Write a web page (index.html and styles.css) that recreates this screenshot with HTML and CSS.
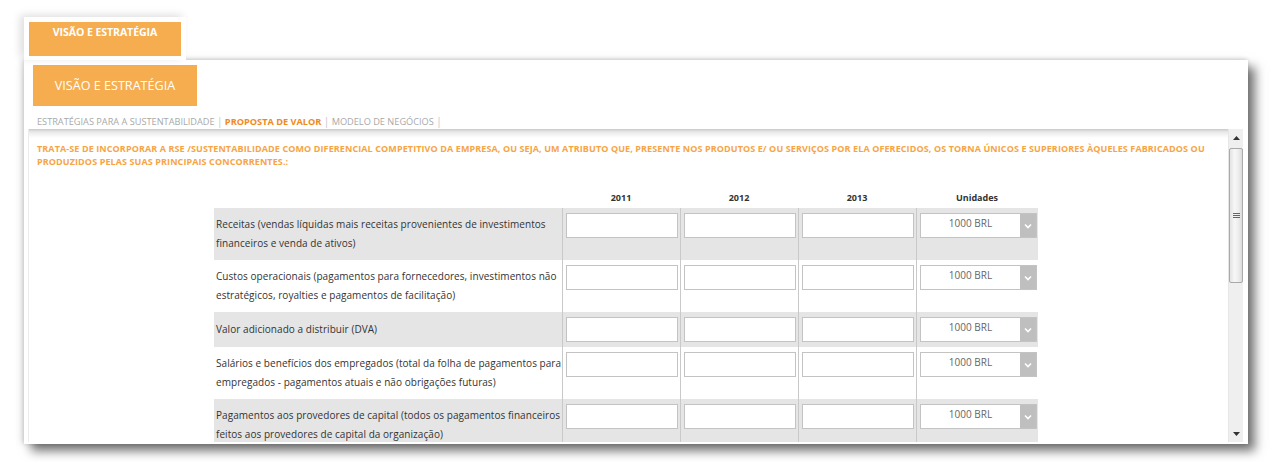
FILE: index.html
```html
<!DOCTYPE html>
<html lang="pt">
<head>
<meta charset="utf-8">
<title>Visão e Estratégia</title>
<link rel="stylesheet" href="styles.css">
</head>
<body>
<div class="page">
  <div class="tab"><div class="tab-label">VISÃO E ESTRATÉGIA</div></div>
  <div class="panel">
    <div class="panel-btn">VISÃO E ESTRATÉGIA</div>
    <nav class="crumbs"><span>ESTRATÉGIAS PARA A SUSTENTABILIDADE</span> <span class="sep">|</span> <span class="active">PROPOSTA DE VALOR</span> <span class="sep">|</span> <span>MODELO DE NEGÓCIOS</span> <span class="sep">|</span></nav>
    <div class="viewport">
      <div class="content">
        <p class="desc">TRATA-SE DE INCORPORAR A RSE /SUSTENTABILIDADE COMO DIFERENCIAL COMPETITIVO DA EMPRESA, OU SEJA, UM ATRIBUTO QUE, PRESENTE NOS PRODUTOS E/ OU SERVIÇOS POR ELA OFERECIDOS, OS TORNA ÚNICOS E SUPERIORES ÀQUELES FABRICADOS OU<br>PRODUZIDOS PELAS SUAS PRINCIPAIS CONCORRENTES.:</p>
        <table class="grid">
          <colgroup><col class="w-label"><col class="w-year"><col class="w-year"><col class="w-year"><col class="w-unit"></colgroup>
          <thead>
            <tr><th></th><th>2011</th><th>2012</th><th>2013</th><th>Unidades</th></tr>
          </thead>
          <tbody>
            <tr class="alt">
              <td class="label">Receitas (vendas líquidas mais receitas provenientes de investimentos<br>financeiros e venda de ativos)</td>
              <td class="cell"><input class="field" type="text"></td>
              <td class="cell"><input class="field" type="text"></td>
              <td class="cell"><input class="field" type="text"></td>
              <td class="cell unit"><div class="select"><span class="select-val">1000 BRL</span><span class="select-btn"><svg width="8" height="6" viewBox="0 0 8 6"><path d="M1 1.5 L4 4.5 L7 1.5" fill="none" stroke="#fff" stroke-width="1.6"/></svg></span></div></td>
            </tr>
            <tr>
              <td class="label">Custos operacionais (pagamentos para fornecedores, investimentos não<br>estratégicos, royalties e pagamentos de facilitação)</td>
              <td class="cell"><input class="field" type="text"></td>
              <td class="cell"><input class="field" type="text"></td>
              <td class="cell"><input class="field" type="text"></td>
              <td class="cell unit"><div class="select"><span class="select-val">1000 BRL</span><span class="select-btn"><svg width="8" height="6" viewBox="0 0 8 6"><path d="M1 1.5 L4 4.5 L7 1.5" fill="none" stroke="#fff" stroke-width="1.6"/></svg></span></div></td>
            </tr>
            <tr class="alt">
              <td class="label">Valor adicionado a distribuir (DVA)</td>
              <td class="cell"><input class="field" type="text"></td>
              <td class="cell"><input class="field" type="text"></td>
              <td class="cell"><input class="field" type="text"></td>
              <td class="cell unit"><div class="select"><span class="select-val">1000 BRL</span><span class="select-btn"><svg width="8" height="6" viewBox="0 0 8 6"><path d="M1 1.5 L4 4.5 L7 1.5" fill="none" stroke="#fff" stroke-width="1.6"/></svg></span></div></td>
            </tr>
            <tr>
              <td class="label">Salários e benefícios dos empregados (total da folha de pagamentos para<br>empregados - pagamentos atuais e não obrigações futuras)</td>
              <td class="cell"><input class="field" type="text"></td>
              <td class="cell"><input class="field" type="text"></td>
              <td class="cell"><input class="field" type="text"></td>
              <td class="cell unit"><div class="select"><span class="select-val">1000 BRL</span><span class="select-btn"><svg width="8" height="6" viewBox="0 0 8 6"><path d="M1 1.5 L4 4.5 L7 1.5" fill="none" stroke="#fff" stroke-width="1.6"/></svg></span></div></td>
            </tr>
            <tr class="alt">
              <td class="label">Pagamentos aos provedores de capital (todos os pagamentos financeiros<br>feitos aos provedores de capital da organização)</td>
              <td class="cell"><input class="field" type="text"></td>
              <td class="cell"><input class="field" type="text"></td>
              <td class="cell"><input class="field" type="text"></td>
              <td class="cell unit"><div class="select"><span class="select-val">1000 BRL</span><span class="select-btn"><svg width="8" height="6" viewBox="0 0 8 6"><path d="M1 1.5 L4 4.5 L7 1.5" fill="none" stroke="#fff" stroke-width="1.6"/></svg></span></div></td>
            </tr>
          </tbody>
        </table>
      </div>
      <div class="scrollbar">
        <div class="sb-arrow"><svg width="7" height="4" viewBox="0 0 7 4"><path d="M0 4 L3.5 0 L7 4 Z" fill="#333"/></svg></div>
        <div class="sb-thumb"><svg width="7" height="6" viewBox="0 0 7 6"><path d="M0 0.5 H7 M0 2.5 H7 M0 4.5 H7" stroke="#666" stroke-width="1"/></svg></div>
        <div class="sb-track"></div>
        <div class="sb-arrow"><svg width="7" height="4" viewBox="0 0 7 4"><path d="M0 0 L7 0 L3.5 4 Z" fill="#333"/></svg></div>
      </div>
    </div>
  </div>
</div>
</body>
</html>
```

FILE: styles.css
```css
* { box-sizing: border-box; }

html, body {
  margin: 0;
  padding: 0;
  background: #fff;
}

body {
  font-family: "Open Sans", "Noto Sans", sans-serif;
  color: #333;
  overflow: hidden;
}

.page {
  padding: 17px 0 0 24px;
  width: 1270px;
  height: 462px;
}

.tab {
  position: relative;
  z-index: 2;
  width: 162px;
  height: 43px;
  padding: 5px 5px 4px;
  background: #fff;
  box-shadow: -4px -2px 8px rgba(0, 0, 0, 0.13);
}

.tab-label {
  height: 34px;
  background: #f5ad4f;
  color: #fff;
  font-weight: 700;
  font-size: 10.6px;
  line-height: 14px;
  padding-top: 3px;
  text-align: center;
  letter-spacing: -0.1px;
}

.panel {
  width: 1224px;
  height: 384px;
  background: #fff;
  padding: 5px 5px 2px 4px;
  display: flex;
  flex-direction: column;
  box-shadow: 7px 7px 10px rgba(0, 0, 0, 0.55), -3px 0 6px rgba(0, 0, 0, 0.12), 0 -1px 4px rgba(0, 0, 0, 0.1);
}

.panel-btn {
  width: 164px;
  height: 41px;
  margin-left: 5px;
  background: #f5ad4f;
  color: #fff;
  font-size: 12.6px;
  line-height: 41px;
  text-align: center;
}

.crumbs {
  margin-top: 8px;
  padding-left: 9px;
  height: 14px;
  line-height: 14px;
  font-size: 9.2px;
  color: #a9a9a9;
  white-space: nowrap;
}

.crumbs .active {
  color: #f08a1c;
  font-weight: 700;
}

.crumbs .sep {
  color: #c4c4c4;
  font-size: 10px;
}

.viewport {
  margin-top: 1px;
  flex: 1;
  display: flex;
  min-height: 0;
  border-left: 1px solid #ececec;
  background: linear-gradient(#c9c9c9, #e9e9e9 3px, #fff 9px);
}

.content {
  flex: 1;
  overflow: hidden;
  padding-top: 13px;
}

.desc {
  margin: 0 20px 0 8px;
  color: #f7a444;
  font-size: 9px;
  font-weight: 700;
  line-height: 13px;
  letter-spacing: 0.1px;
  white-space: nowrap;
}

.grid {
  margin: 20px 0 0 185px;
  border-collapse: separate;
  border-spacing: 0;
  table-layout: fixed;
  width: 824px;
}

.w-label { width: 348px; }
.w-year { width: 118px; }
.w-unit { width: 122px; }

.grid th {
  height: 20px;
  font-size: 9px;
  font-weight: 700;
  color: #333;
  text-align: center;
  padding: 0;
  line-height: 20px;
}

.grid tr.alt td { background: #e5e5e5; }

.grid td.label {
  padding: 7px 2px;
  font-size: 10px;
  letter-spacing: 0.05px;
  line-height: 19px;
  white-space: nowrap;
  vertical-align: middle;
  color: #333;
}

.grid td.cell {
  border-left: 1px solid #c9c9c9;
  padding: 5px 2px 5px 3px;
  vertical-align: top;
}

.grid td.unit { padding-right: 1px; }

.field {
  display: block;
  width: 112px;
  height: 25px;
  margin: 0;
  border: 1px solid #c3c3c3;
  background: #fff;
  padding: 0 4px;
  font: 10px "Open Sans", sans-serif;
}

.select {
  display: flex;
  width: 117px;
  height: 25px;
  border: 1px solid #c3c3c3;
  background: #fff;
}

.select-val {
  flex: 1;
  text-align: center;
  font-size: 10px;
  line-height: 14px;
  padding-top: 2px;
  color: #666;
}

.select-btn {
  width: 16px;
  background: #bfbfbf;
  display: flex;
  align-items: center;
  justify-content: center;
}

.select-btn svg { display: block; }

.scrollbar {
  width: 15px;
  background: #efefef;
  border-left: 1px solid #e6e6e6;
  display: flex;
  flex-direction: column;
}

.sb-arrow {
  height: 17px;
  display: flex;
  align-items: center;
  justify-content: center;
}

.sb-thumb {
  height: 135px;
  margin: 2px 0 0 0;
  border: 1px solid #a9a9a9;
  border-radius: 2px;
  background: linear-gradient(90deg, #e4e4e4, #f7f7f7 40%, #ededed 70%, #dadada);
  display: flex;
  align-items: center;
  justify-content: center;
}

.sb-track { flex: 1; }
```
